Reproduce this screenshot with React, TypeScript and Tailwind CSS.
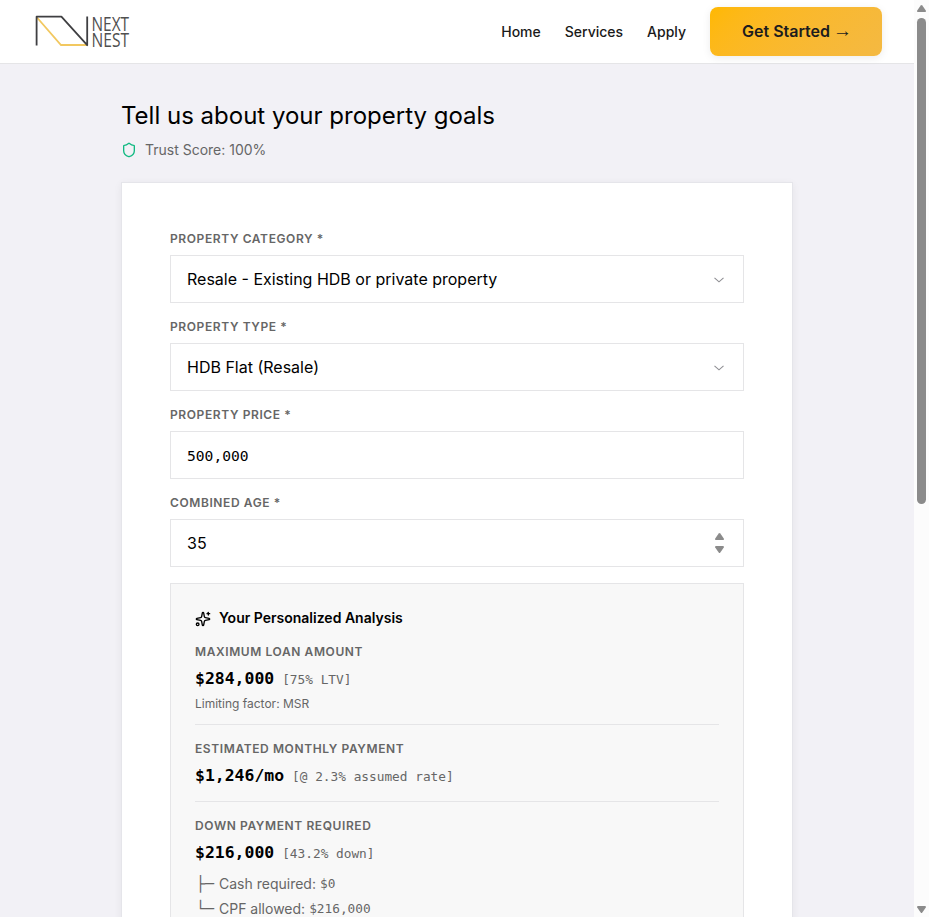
import type { ReactNode } from 'react'
import { Shield, Sparkles } from 'lucide-react'

const mono = "font-['DejaVu_Sans_Mono',monospace]"

function Logo() {
  return (
    <svg width="102" height="44" viewBox="0 0 102 44" fill="none" className="overflow-visible" aria-label="Next Nest">
      <path d="M6 7.5 L30 35 H56" stroke="#f2c860" strokeWidth="1.8" />
      <path d="M5.6 35.5 V6.7 H30.4 L56.2 35.2 V6.5" stroke="#3f3f42" strokeWidth="1.8" strokeLinejoin="round" />
      <g fill="#505050" fontFamily="Open Sans, sans-serif" fontSize="20.5" fontWeight="400">
        <text x="60.5" y="21" textLength="37.5" lengthAdjust="spacingAndGlyphs">NEXT</text>
        <text x="60.5" y="37.3" textLength="37.5" lengthAdjust="spacingAndGlyphs">NEST</text>
      </g>
    </svg>
  )
}

function Triangle({ down = false }: { down?: boolean }) {
  return (
    <svg width="9" height="7" viewBox="0 0 9 7" fill="#8b8b8b" className={down ? 'rotate-180' : ''}>
      <path d="M3.7 .6 Q4.5 -.4 5.3 .6 L8.8 5.5 Q9.2 7 8 7 H1 Q-.2 7 .2 5.5 Z" />
    </svg>
  )
}

function Field({ label, children, icon }: { label: string; children: ReactNode; icon?: ReactNode }) {
  return (
    <div className="mb-4">
      <div className="mb-2 h-4 text-xs leading-4 font-semibold tracking-[0.6px] text-[#666]">{label}</div>
      <div className="flex h-12 items-center justify-between border border-[#e5e5e7] bg-white pr-[19px] pl-4 text-base text-black">
        {children}
        {icon}
      </div>
    </div>
  )
}

function Result({ label, value, note, children }: { label: string; value: string; note: string; children?: ReactNode }) {
  return (
    <div className="border-b border-[#e5e5e7] pb-3 last:border-0">
      <div className="text-xs leading-4 font-semibold tracking-[0.6px] text-[#666]">{label}</div>
      <div className={`mt-[5px] flex h-[27px] items-baseline gap-2 whitespace-nowrap leading-7 ${mono}`}>
        <span className="text-[16.44px] font-bold text-black">{value}</span>
        <span className="text-[12.79px] text-[#666]">{note}</span>
      </div>
      {children}
    </div>
  )
}

function Branch({ mark, label, value }: { mark: string; label: string; value: string }) {
  return (
    <div className="flex h-[25px] items-center text-sm text-[#666]">
      <span className={`w-6 pl-px text-[15px] leading-5 ${mono}`}>{mark}</span>
      <span className="mr-1">{label}</span>
      <span className={`pt-0.5 text-[12.79px] ${mono}`}>{value}</span>
    </div>
  )
}

export default function App() {
  const chevron = (
    <svg width="12" height="8" viewBox="0 0 12 8" fill="none" className="-mr-px mt-0.5">
      <path d="M1.5 1.8 L6 5.8 L10.5 1.8" stroke="#8e8e93" strokeWidth="1.1" />
    </svg>
  )
  return (
    <div className="flex h-[917px] w-[929px] overflow-hidden bg-[#f2f1f6] font-['Inter',sans-serif] text-black">
      <div className="min-w-0 flex-1">
        <header className="flex h-16 items-center justify-between border-b border-[#e5e5e7] bg-white pr-8 pl-[31px]">
          <Logo />
          <nav className="flex items-center gap-6 text-sm font-medium text-[#1a1a1a]">
            <a>Home</a>
            <a>Services</a>
            <a>Apply</a>
            <button className="flex h-[49px] w-[172px] items-center gap-[3px] rounded-lg bg-linear-135 from-[#ffb800] to-[#f4b942] pb-0.5 pl-8 text-base font-semibold text-[#1c1c1e] shadow-[0_2px_8px_rgba(0,0,0,0.08)]">
              <span>Get Started</span>
              <span className="font-['Liberation_Sans',sans-serif] text-[19px] leading-5 font-normal">→</span>
            </button>
          </nav>
        </header>
        <main className="mx-auto w-[672px] pt-9">
          <h1 className="h-8 text-2xl leading-8">Tell us about your property goals</h1>
          <div className="mt-2 mb-[22px] flex h-5 items-center gap-2 text-sm text-[#666]">
            <Shield size={16} className="text-[#10b981]" />
            <span>Trust Score: 100%</span>
          </div>
          <section className="h-[1000px] border border-[#e5e5ea] bg-white p-12 shadow-[0_2px_8px_rgba(0,0,0,0.06)]">
            <Field label="PROPERTY CATEGORY *" icon={chevron}>Resale - Existing HDB or private property</Field>
            <Field label="PROPERTY TYPE *" icon={chevron}>HDB Flat (Resale)</Field>
            <Field label="PROPERTY PRICE *">
              <span className={`pt-0.5 text-[14.62px] ${mono}`}>500,000</span>
            </Field>
            <Field
              label="COMBINED AGE *"
              icon={
                <span className="flex flex-col gap-1.5">
                  <Triangle />
                  <Triangle down />
                </span>
              }
            >
              35
            </Field>
            <div className="h-[500px] border border-[#e5e5e7] bg-[#f8f8f8] p-6">
              <div className="mb-4 flex h-5 items-center gap-2 text-sm font-semibold">
                <Sparkles size={16} className="mt-0.5" />
                Your Personalized Analysis
              </div>
              <div className="flex flex-col gap-4">
                <Result label="MAXIMUM LOAN AMOUNT" value="$284,000" note="[75% LTV]">
                  <div className="mt-1 text-xs leading-4 text-[#666]">Limiting factor: MSR</div>
                </Result>
                <Result label="ESTIMATED MONTHLY PAYMENT" value="$1,246/mo" note="[@ 2.3% assumed rate]" />
                <Result label="DOWN PAYMENT REQUIRED" value="$216,000" note="[43.2% down]">
                  <div className="mt-[5px]">
                    <Branch mark="├─" label="Cash required:" value="$0" />
                    <Branch mark="└─" label="CPF allowed:" value="$216,000" />
                  </div>
                </Result>
              </div>
            </div>
          </section>
        </main>
      </div>
      <aside className="flex h-full w-[15px] flex-col items-center bg-[#fcfcfc] pt-[5px] pb-1">
        <Triangle />
        <div className="mt-1.5 h-[486px] w-[9px] rounded-full bg-[#8b8b8b]" />
        <div className="mt-auto">
          <Triangle down />
        </div>
      </aside>
    </div>
  )
}
